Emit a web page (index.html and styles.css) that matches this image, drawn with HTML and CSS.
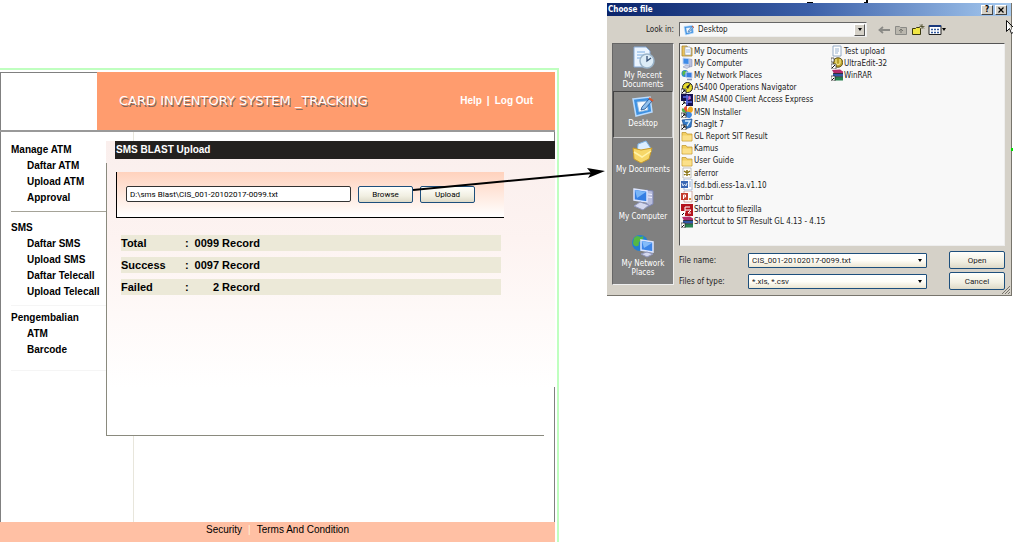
FILE: index.html
```html
<!DOCTYPE html>
<html lang="en">
<head>
<meta charset="utf-8">
<title>Card Inventory System - SMS Blast Upload</title>
<link rel="stylesheet" href="styles.css">
</head>
<body>
<svg class="sprite" aria-hidden="true">
  <symbol id="folder" viewBox="0 0 12 12"><path d="M1 2.500h4l1 1.500h5v7H1z" fill="#f3cf63" stroke="#c39a35" stroke-width=".8"/><path d="M1.500 5.500h9v5h-9z" fill="#fbe08a"/></symbol>
  <symbol id="documents" viewBox="0 0 12 12"><path d="M1 1h5l1 2h4v8H1z" fill="#eac25a" stroke="#a98730" stroke-width=".8"/><path d="M4 2h5l1 2v6H4z" fill="#fff" stroke="#8894a8" stroke-width=".6"/><path d="M5 5h4M5 7h4" stroke="#6f9ad6" stroke-width=".7"/></symbol>
  <symbol id="computer" viewBox="0 0 12 12"><path d="M8 2l3 .5v7L8 10z" fill="#b7bfe0" stroke="#7780a8" stroke-width=".5"/><path d="M2 1l6 .5v6L2 7z" fill="#3f8be8" stroke="#c4d2f0"/><path d="M2 10l3-2 4 1.500-3 2z" fill="#cdd3ea" stroke="#828bb0" stroke-width=".5"/></symbol>
  <symbol id="network" viewBox="0 0 12 12"><circle cx="4" cy="4.500" r="3.500" fill="#2a86d6"/><path d="M2 2c2-1 2 1 4 0 0 3-3 2-3 5C1 6 1 4 2 2z" fill="#5ab948"/><path d="M5 3l6 .5v5.500L5 8.500z" fill="#3b7ee0" stroke="#c4d2f0"/><path d="M6 10.500h5" stroke="#8c95bb" stroke-width="1.500"/></symbol>
  <symbol id="navigator" viewBox="0 0 12 12"><circle cx="6.500" cy="5.500" r="5" fill="#e9dc2d" stroke="#222"/><path d="M10 1L7 7 5 5z" fill="#222"/><path d="M0 7h5v5H0z" fill="#fff" stroke="#222" stroke-width=".7"/><path d="M1 11l3-3M2 8h2v2" stroke="#111" fill="none"/></symbol>
  <symbol id="client" viewBox="0 0 12 12"><path d="M0 0h12v12H0z" fill="#15104f"/><path d="M2 3h8M6 1v10M4 8h7" stroke="#5e6de8" stroke-width="1.500"/><path d="M8 1l2 4-3 1z" fill="#d86bc5"/><path d="M0 7h5v5H0z" fill="#fff"/><path d="M1 11l3-3M2 8h2v2" stroke="#111" fill="none"/></symbol>
  <symbol id="msn" viewBox="0 0 12 12"><path d="M6 7C1 6 2 0 6 0z" fill="#e65033"/><path d="M6 6c0-5 5-8 6-3 0 4-3 5-6 4z" fill="#f2a91f"/><path d="M5 6c7-1 7 4 4 6-4 0-5-2-4-6z" fill="#3f87dd"/><path d="M6 7C0 7 0 3 2 2z" fill="#55ad45"/><path d="M0 7h5v5H0z" fill="#fff" stroke="#222" stroke-width=".7"/><path d="M1 11l3-3M2 8h2v2" stroke="#111" fill="none"/></symbol>
  <symbol id="snagit" viewBox="0 0 12 12"><path d="M1 2l10-1-1 8-6 2z" fill="#347bc6" stroke="#1c4c91" stroke-width=".7"/><path d="M4 3h5L6 8" stroke="#d8efff" stroke-width="1.400" fill="none"/><path d="M0 7h5v5H0z" fill="#fff" stroke="#222" stroke-width=".7"/><path d="M1 11l3-3M2 8h2v2" stroke="#111" fill="none"/></symbol>
  <symbol id="log" viewBox="0 0 12 12"><path d="M2 1h8v10H2z" fill="#fff" stroke="#aaa" stroke-width=".7"/><path d="M3 4l6 4M9 4L3 8M6 3v6" stroke="#8a7415" stroke-width="1.500"/></symbol>
  <symbol id="word" viewBox="0 0 12 12"><path d="M3 0h8v11H3z" fill="#fff" stroke="#8aa3cb" stroke-width=".7"/><path d="M8 3h2M8 5h2M8 7h2" stroke="#6c8fc9" stroke-width=".8"/><path d="M0 2h7v7H0z" fill="#3a68b5"/><path d="M1 4l1 3 1.500-2L5 7l1-3" stroke="#fff" fill="none" stroke-width=".8"/></symbol>
  <symbol id="slides" viewBox="0 0 12 12"><path d="M3 0h8v11H3z" fill="#fff" stroke="#bd8a82" stroke-width=".7"/><path d="M0 2h7v7H0z" fill="#c43b2d"/><path d="M2.500 8V4h2v2h-2" stroke="#fff" fill="none"/><path d="M8 8h2" stroke="#d99037" stroke-width="2"/></symbol>
  <symbol id="filezilla" viewBox="0 0 12 12"><path d="M0 0h12v12H0z" fill="#b4131d"/><path d="M4 9V3h5M4 6h3M7 6h3L7 9h3" stroke="#fff" fill="none"/><path d="M0 7h4v5H0z" fill="#fff"/><path d="M1 11l2-2" stroke="#111"/></symbol>
  <symbol id="rar" viewBox="0 0 12 12"><path d="M1 1l8-.5 3 2v2H3z" fill="#b32c6a"/><path d="M2 4.500h10v3H2z" fill="#3159a8"/><path d="M2 8h10v3.500H2z" fill="#288350"/><path d="M2 4.500h10M2 7.700h10" stroke="#111" stroke-width=".7"/><path d="M0 7h4v5H0z" fill="#fff" stroke="#222" stroke-width=".7"/><path d="M1 11l2-2" stroke="#111"/></symbol>
  <symbol id="note" viewBox="0 0 12 12"><path d="M2 1h8v10H2z" fill="#fff" stroke="#8ba3bf" stroke-width=".9"/><path d="M4 4h4M4 6h4M4 8h3" stroke="#6d92bd" stroke-width=".7"/></symbol>
  <symbol id="ultra" viewBox="0 0 12 12"><circle cx="7" cy="5.500" r="4.800" fill="#b9a02a" stroke="#4a3f10" stroke-width=".8"/><path d="M5 2v4c0 2 4 2 4 0V2" stroke="#f5e98a" fill="none" stroke-width="1.300"/><path d="M0 1h3v4H0zM0 7h5v5H0z" fill="#fff" stroke="#333" stroke-width=".7"/><path d="M1 11l3-3" stroke="#111"/></symbol>
  <symbol id="desktop" viewBox="0 0 24 24"><path d="M2 5l17-2 2 15-16 4z" fill="#3f92e2" stroke="#b9dcff" stroke-width="1.500"/><path d="M6 8l10-1 1 9-9 2z" fill="#f5faff" stroke="#8eb7df" stroke-width=".8"/><path d="M11 13l7-8 3 2-7 8-4 1z" fill="#8fc0ee" stroke="#194f90" stroke-width=".8"/><path d="M18 4l4 3" stroke="#d6572d" stroke-width="2"/></symbol>
  <symbol id="recent" viewBox="0 0 24 24"><path d="M3 1h12l4 4v16H3z" fill="#eaf4ff" stroke="#87aad6"/><path d="M6 6h8M6 9h9M6 12h5" stroke="#7aace0"/><circle cx="16" cy="15" r="7" fill="#dcecf7" stroke="#9bb4c9" stroke-width="1.500"/><path d="M16 10v5l4-3" stroke="#344e72" fill="none" stroke-width="1.300"/></symbol>
  <symbol id="mydocs" viewBox="0 0 24 24"><path d="M7 4l8-3 6 9-7 7-8-3z" fill="#dceeff" stroke="#7db4e5"/><path d="M2 8l8 2 11-2-3 11-8 4-7-4z" fill="#f7d768" stroke="#c99b29"/><path d="M3 12l8 5 9-6" stroke="#fff2a8" stroke-width="1.500" fill="none"/></symbol>
  <symbol id="mypc" viewBox="0 0 24 24"><path d="M15 3l7 1v13l-6 3z" fill="#b8bddd" stroke="#7e86b4"/><path d="M17 7l4 .5M17 10l4 .5" stroke="#eef" /><path d="M3 2l13 2v11L3 13z" fill="#347ee3" stroke="#dbe5ff" stroke-width="1.500"/><path d="M4 3l11 2-9 6z" fill="#79b5f7"/><path d="M3 19l6-4 9 3-6 5z" fill="#d4d8ed" stroke="#9097bd"/></symbol>
  <symbol id="mynet" viewBox="0 0 24 24"><circle cx="9" cy="9" r="8" fill="#237fd3"/><path d="M3 4c5-5 5 1 9-2 2 5-6 4-4 9-3 3-6 0-6-2z" fill="#55b844"/><path d="M10 6l12 2v10l-12-2z" fill="#3c85e8" stroke="#dbe5ff" stroke-width="1.500"/><path d="M11 7l10 2-8 5z" fill="#83bbfa"/><path d="M10 20l6-2 6 2-6 3z" fill="#d4d8ed" stroke="#9097bd"/></symbol>
</svg>

<div class="scene">
  <div class="app">
    <header class="banner">
      <div class="logo"></div>
      <h1 class="brand">CARD INVENTORY SYSTEM _TRACKING</h1>
      <nav class="account"><a href="#">Help</a><span>|</span><a href="#">Log Out</a></nav>
    </header>
    <div class="workspace">
      <nav class="sidebar">
        <section class="group">
          <h2>Manage ATM</h2>
          <a href="#">Daftar ATM</a><a href="#">Upload ATM</a><a href="#">Approval</a>
        </section>
        <section class="group faint">
          <h2>SMS</h2>
          <a href="#">Daftar SMS</a><a href="#">Upload SMS</a><a href="#">Daftar Telecall</a><a href="#">Upload Telecall</a>
        </section>
        <section class="group faint last">
          <h2>Pengembalian</h2>
          <a href="#">ATM</a><a href="#">Barcode</a>
        </section>
      </nav>
      <main class="main">
        <div class="panel">
          <h2 class="panel-title">SMS BLAST Upload</h2>
          <div class="panel-body">
            <form class="upload">
              <input class="path" type="text" aria-label="File to upload" value="D:\sms Blast\CIS_001-20102017-0099.txt">
              <button class="btn" type="button">Browse</button>
              <button class="btn" type="button">Upload</button>
            </form>
            <dl class="stats">
              <div><dt>Total</dt><dd>:</dd><dd class="count">0099 Record</dd></div>
              <div><dt>Success</dt><dd>:</dd><dd class="count">0097 Record</dd></div>
              <div><dt>Failed</dt><dd>:</dd><dd class="count">2 Record</dd></div>
            </dl>
          </div>
        </div>
      </main>
    </div>
    <footer class="footer"><a href="#">Security</a><span>|</span><a href="#">Terms And Condition</a></footer>
  </div>

  <div class="dialog-side">
    <section class="dialog" role="dialog" aria-labelledby="dlg-title">
      <div class="titlebar">
        <h2 id="dlg-title">Choose file</h2>
        <button type="button" aria-label="Help">?</button>
        <button type="button" aria-label="Close"><svg viewBox="0 0 8 8"><path d="M1.500 1.500l5 5M6.500 1.500l-5 5" stroke="#000" stroke-width="1.200"/></svg></button>
      </div>
      <div class="content">
        <label class="lookin" for="look">Look in:</label>
        <div class="toolbar">
          <div class="combo classic">
            <svg><use href="#desktop"/></svg>
            <select id="look"><option>Desktop</option></select>
            <span class="drop"></span>
          </div>
          <div class="tools">
            <button type="button" aria-label="Back"><svg viewBox="0 0 14 12"><path d="M13 6H3M6 3L2.500 6 6 9" stroke="#8a8a86" stroke-width="1.800" fill="none"/></svg></button>
            <button type="button" aria-label="Up one level"><svg viewBox="0 0 14 12"><path d="M1.500 2.500h4l1 1h6v7h-11z" fill="#bab7ae" stroke="#8a8a86"/><path d="M7 9V5M5 7l2-2 2 2" stroke="#74746f" fill="none"/></svg></button>
            <button type="button" aria-label="New folder"><svg viewBox="0 0 14 12"><path d="M1.500 4.500h3l1-1h3l1 1v6h-8z" fill="#f1e644" stroke="#39370f"/><path d="M11 0v5M8.500 2.500h5M9 .5l4 4" stroke="#4a4926" stroke-width=".8"/></svg></button>
            <button type="button" aria-label="View menu"><svg viewBox="0 0 14 12"><path d="M1 1.500h12v9H1z" fill="#fff" stroke="#222"/><path d="M1 2h12" stroke="#19397e" stroke-width="2"/><path d="M3 5.500h2M6 5.500h2M9 5.500h2M3 8.500h2M6 8.500h2M9 8.500h2" stroke="#345b9e" stroke-width="1.300"/></svg><i class="caret"></i></button>
          </div>
        </div>
        <nav class="places">
          <button type="button"><svg><use href="#recent"/></svg>My Recent Documents</button>
          <button type="button" class="current"><svg><use href="#desktop"/></svg>Desktop</button>
          <button type="button"><svg><use href="#mydocs"/></svg>My Documents</button>
          <button type="button"><svg><use href="#mypc"/></svg>My Computer</button>
          <button type="button"><svg><use href="#mynet"/></svg>My Network Places</button>
        </nav>
        <div class="browser">
          <ul class="files">
            <li><svg><use href="#documents"/></svg>My Documents</li>
            <li><svg><use href="#computer"/></svg>My Computer</li>
            <li><svg><use href="#network"/></svg>My Network Places</li>
            <li><svg><use href="#navigator"/></svg>AS400 Operations Navigator</li>
            <li><svg><use href="#client"/></svg>IBM AS400 Client Access Express</li>
            <li><svg><use href="#msn"/></svg>MSN Installer</li>
            <li><svg><use href="#snagit"/></svg>SnagIt 7</li>
            <li><svg><use href="#folder"/></svg>GL Report SIT Result</li>
            <li><svg><use href="#folder"/></svg>Kamus</li>
            <li><svg><use href="#folder"/></svg>User Guide</li>
            <li><svg><use href="#log"/></svg>aferror</li>
            <li><svg><use href="#word"/></svg>fsd.bdi.ess-1a.v1.10</li>
            <li><svg><use href="#slides"/></svg>gmbr</li>
            <li><svg><use href="#filezilla"/></svg>Shortcut to filezilla</li>
            <li><svg><use href="#rar"/></svg>Shortcut to SIT Result GL 4.13 - 4.15</li>
            <li><svg><use href="#note"/></svg>Test upload</li>
            <li><svg><use href="#ultra"/></svg>UltraEdit-32</li>
            <li><svg><use href="#rar"/></svg>WinRAR</li>
          </ul>
          <form class="fields">
            <label for="fname">File name:</label>
            <div class="combo"><input id="fname" type="text" value="CIS_001-20102017-0099.txt"><i class="caret"></i></div>
            <button class="btn" type="button">Open</button>
            <label for="ftype">Files of type:</label>
            <div class="combo"><select id="ftype"><option>*.xls, *.csv</option></select><i class="caret"></i></div>
            <button class="btn" type="button">Cancel</button>
          </form>
        </div>
      </div>
      <svg class="grip" viewBox="0 0 8 8"><path d="M0 8l8-8M3 8l5-5M6 8l2-2" stroke="#77746c"/></svg>
      <svg class="pointer" viewBox="0 0 7 14"><path d="M.5.5v11l3-3 2 5 1.500-1" fill="#fff" stroke="#111"/><path d="M.5.5L7 7" stroke="#111"/></svg>
      <span class="marker"></span>
    </section>
  </div>
  <svg class="arrow" viewBox="0 0 194 26"><path d="M0 22L180 5" stroke="#000" stroke-width="2"/><path d="M192 3L174 0l4 5-3 5z"/></svg>
  <svg class="fragment" viewBox="0 0 64 3"><path d="M0 2h6v1H0zM59 0h2v3h-4V2h2z"/></svg>
</div>
</body>
</html>
```
FILE: styles.css
```css
* { box-sizing: border-box; }
body {
  margin: 0;
  background: #fff;
  color: #000;
  font: 10px/16px "Liberation Sans", Arial, sans-serif;
}
h1, h2, ul, dl, dd { margin: 0; padding: 0; font-size: inherit; }
a { color: inherit; text-decoration: none; }
button, input, select { font: inherit; color: inherit; margin: 0; }
.sprite { position: absolute; width: 0; height: 0; }

.scene {
  position: relative;
  display: grid;
  grid-template-columns: 559fr 405fr;
  column-gap: 48px;
  padding-right: 5px;
  min-height: 100vh;
}

/* Web application */
.app {
  display: flex;
  flex-direction: column;
  margin-top: 68px;
  padding: 2px 2px 0 0;
  border-top: 2px solid #bfffbf;
  border-right: 2px solid #bfffbf;
}
.banner {
  display: flex;
  align-items: center;
  height: 60px;
  background: #ff9c6e;
  color: #fff;
  border-bottom: 2px solid #999;
}
.logo {
  width: 97px;
  align-self: stretch;
  background: #fff;
  border-top: 1px solid #808080;
  border-left: 1px solid #808080;
}
.brand {
  margin-left: 22px;
  font: 13px/20px "DejaVu Sans", sans-serif;
  text-shadow: 1px 2px #80685e;
  white-space: nowrap;
}
.account {
  display: flex;
  gap: 5px;
  margin-left: auto;
  padding-right: 22px;
  font-weight: bold;
}
.workspace {
  flex: 1;
  display: grid;
  grid-template-columns: 105px 1fr;
  border: solid #808080;
  border-width: 0 1px;
}
.sidebar { padding: 2px 0 0 10px; font-weight: bold; }
.group { padding: 8px 0 5px; border-bottom: 1px solid #a5a398; }
.group.faint { border-color: #f5f5f5; }
.group.last { padding: 4px 0 12px; }
.group a { display: block; padding-left: 16px; white-space: nowrap; }
.main {
  padding-top: 9px;
  background: linear-gradient(#e8e6dc, #e8e6dc) 27px 0 / 1px 100% no-repeat;
}
.panel {
  margin-right: -1px;
  padding-bottom: 1px;
  background:
    linear-gradient(#faefed, #fdf3f1 40%, #fff) 0 0 / 100% 246px no-repeat,
    linear-gradient(#fff, #fff) 0 0 / calc(100% - 1px) calc(100% - 1px) no-repeat;
}
.panel-title {
  margin: 0 0 4px 9px;
  padding-left: 1px;
  background: #23211f;
  color: #fff;
  line-height: 18px;
}
.panel-body {
  margin-right: 11px;
  min-height: 273px;
  padding: 9px 40px 0 9px;
  border-left: 1px solid #8a8a7e;
  border-bottom: 1px solid #8a8a7e;
}
.upload {
  display: flex;
  align-items: flex-start;
  gap: 7px;
  height: 46px;
  padding: 14px 29px 0 9px;
  border-left: 1px solid #000;
  border-bottom: 1px solid #000;
  background: linear-gradient(#ffd2bd, #fff);
}
.path {
  flex: 1;
  min-width: 0;
  height: 16px;
  padding: 0 3px;
  border: 1px solid #333;
  border-radius: 2px;
  background: #fff;
  font: 8px Roboto, sans-serif;
}
.btn {
  width: 55px;
  height: 17px;
  padding: 0;
  border: 1px solid #1d4f7c;
  border-radius: 2px;
  background: linear-gradient(#fffffb, #f1efe2 60%, #dedac8);
  font: 8px Roboto, sans-serif;
}
.stats {
  display: grid;
  gap: 6px;
  margin: 17px 3px 0 5px;
  font-size: 11px;
  font-weight: bold;
}
.stats div {
  display: grid;
  grid-template-columns: 64px 8px 67px;
  background: #ece9d8;
}
.stats .count { text-align: right; }
.footer {
  display: flex;
  justify-content: center;
  gap: 6px;
  height: 20px;
  background: #ffc0a4;
}
.footer span { color: #fff0dc; }

/* File chooser */
.dialog-side { padding-top: 3px; font-size: 8px; line-height: 9px; }
.dialog {
  position: relative;
  background: #d5d1c8;
  border-right: 1px solid #77746c;
  border-bottom: 1px solid #77746c;
  padding-bottom: 5px;
  color: #222;
  font-family: "DejaVu Sans Condensed", "DejaVu Sans", sans-serif;
}
.titlebar {
  display: flex;
  align-items: center;
  gap: 2px;
  height: 13px;
  padding: 0 4px 0 1px;
  background: linear-gradient(90deg, #0a246a, #3b5fa8 50%, #a6caf0);
  color: #fff;
}
.titlebar h2 { flex: 1; }
.titlebar button {
  width: 12px;
  height: 10px;
  padding: 0;
  border: 1px solid;
  border-color: #fff #444 #444 #fff;
  background: #d5d1c8;
  color: #000;
  font-weight: bold;
  line-height: 8px;
}
.titlebar svg { display: block; width: 8px; height: 8px; margin: auto; }
.content {
  display: grid;
  grid-template-columns: 62px 1fr;
  column-gap: 5px;
  row-gap: 6px;
  padding: 6px 6px 0 5px;
}
.lookin { text-align: right; line-height: 15px; }
.toolbar { display: flex; align-items: center; gap: 10px; }
.combo {
  display: flex;
  align-items: center;
  height: 15px;
  padding-right: 4px;
  border: 1px solid #1d4f7c;
  border-radius: 1px;
  background: linear-gradient(#fff, #fffef8 50%, #ece6d2);
  font-family: Roboto, sans-serif;
}
.combo input, .combo select {
  flex: 1;
  min-width: 0;
  height: 13px;
  padding: 0 3px;
  border: 0;
  background: none;
  appearance: none;
}
.combo.classic {
  flex: 0 1 188px;
  padding: 0 1px 0 3px;
  border-color: #666 #eee #eee #666;
  background: #f8f8f8;
  font-family: inherit;
}
.combo.classic svg { width: 12px; height: 12px; }
.drop {
  display: grid;
  place-items: center;
  width: 11px;
  height: 12px;
  border: 1px solid;
  border-color: #fff #555 #555 #fff;
  background: #d5d1c8;
}
.drop::after, .caret {
  content: "";
  border: solid transparent;
  border-width: 3px 2px 0;
  border-top-color: #000;
}
.tools { display: flex; gap: 3px; }
.tools button {
  display: flex;
  align-items: center;
  padding: 0;
  border: 0;
  background: none;
}
.tools svg { width: 14px; height: 12px; }
.places {
  align-self: start;
  height: 242px;
  border: 1px solid;
  border-color: #666 #eee #eee #666;
  background: #808080;
}
.places button {
  display: flex;
  flex-direction: column;
  align-items: center;
  width: 100%;
  height: 47px;
  padding: 2px 0 0;
  border: 0;
  background: none;
  color: #fff;
  line-height: 9px;
  text-align: center;
}
.places .current {
  border: 1px solid;
  border-color: #444 #ccc #ccc #444;
  background: #8b8a87;
}
.places svg { flex: none; width: 24px; height: 24px; margin-bottom: 1px; }
.files {
  display: grid;
  grid-template-rows: repeat(15, 1fr);
  grid-auto-flow: column;
  grid-template-columns: 150px 1fr;
  height: 203px;
  padding: 1px 0 17px 1px;
  border: 1px solid;
  border-color: #555 #eee #eee #555;
  background: #f8f8f8;
  list-style: none;
}
.files li { display: flex; align-items: center; white-space: nowrap; }
.files svg { flex: none; width: 12px; height: 12px; margin-right: 1px; }
.fields {
  display: grid;
  grid-template-columns: 69px 179px 1fr;
  align-items: center;
  row-gap: 3px;
  padding-top: 5px;
}
.fields .btn { justify-self: end; width: 56px; height: 18px; }
.grip { position: absolute; right: 1px; bottom: 1px; width: 8px; height: 8px; }
.pointer { position: absolute; right: -2px; top: 17px; width: 7px; height: 14px; }
.marker { position: absolute; right: -2px; top: 145px; width: 2px; height: 3px; background: #00e000; }

/* Callout between the page and the chooser */
.arrow { position: absolute; left: 413px; top: 168px; width: 194px; height: 26px; }
.fragment { position: absolute; right: 146px; top: 0; width: 64px; height: 3px; }
```
